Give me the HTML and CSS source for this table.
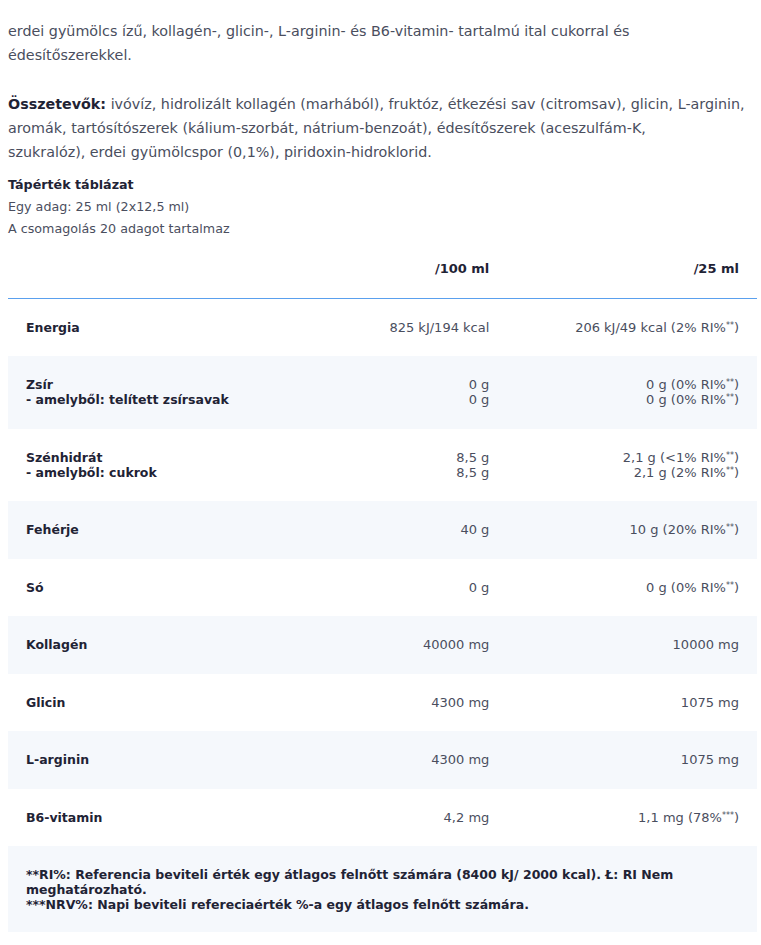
FILE: index.html
```html
<!DOCTYPE html>
<html lang="hu">
<head>
<meta charset="utf-8">
<link rel="stylesheet" href="styles.css">
</head>
<body>
<div class="page">
  <p class="intro">erdei gyümölcs ízű, kollagén-, glicin-, L-arginin- és B6-vitamin- tartalmú ital cukorral és édesítőszerekkel.</p>
  <p class="ingredients"><strong>Összetevők:</strong> ivóvíz, hidrolizált kollagén (marhából), fruktóz, étkezési sav (citromsav), glicin, L-arginin,<br>aromák, tartósítószerek (kálium-szorbát, nátrium-benzoát), édesítőszerek (aceszulfám-K,<br>szukralóz), erdei gyümölcspor (0,1%), piridoxin-hidroklorid.</p>
  <h4 class="table-title">Tápérték táblázat</h4>
  <p class="meta">Egy adag: 25 ml (2x12,5 ml)<br>A csomagolás 20 adagot tartalmaz</p>
  <table class="nutri">
    <thead>
      <tr><th></th><th>/100 ml</th><th>/25 ml</th></tr>
    </thead>
    <tbody>
      <tr><td>Energia</td><td>825 kJ/194 kcal</td><td>206 kJ/49 kcal (2% RI%<sup>**</sup>)</td></tr>
      <tr><td>Zsír<br>- amelyből: telített zsírsavak</td><td>0 g<br>0 g</td><td>0 g (0% RI%<sup>**</sup>)<br>0 g (0% RI%<sup>**</sup>)</td></tr>
      <tr><td>Szénhidrát<br>- amelyből: cukrok</td><td>8,5 g<br>8,5 g</td><td>2,1 g (&lt;1% RI%<sup>**</sup>)<br>2,1 g (2% RI%<sup>**</sup>)</td></tr>
      <tr><td>Fehérje</td><td>40 g</td><td>10 g (20% RI%<sup>**</sup>)</td></tr>
      <tr><td>Só</td><td>0 g</td><td>0 g (0% RI%<sup>**</sup>)</td></tr>
      <tr><td>Kollagén</td><td>40000 mg</td><td>10000 mg</td></tr>
      <tr><td>Glicin</td><td>4300 mg</td><td>1075 mg</td></tr>
      <tr><td>L-arginin</td><td>4300 mg</td><td>1075 mg</td></tr>
      <tr><td>B6-vitamin</td><td>4,2 mg</td><td>1,1 mg (78%<sup>***</sup>)</td></tr>
    </tbody>
  </table>
  <div class="notes">
    **RI%: Referencia beviteli érték egy átlagos felnőtt számára (8400 kJ/ 2000 kcal). Ł: RI Nem meghatározható.<br>
    ***NRV%: Napi beviteli refereciaérték %-a egy átlagos felnőtt számára.
  </div>
</div>
</body>
</html>
```

FILE: styles.css
```css
html, body {
  margin: 0;
  padding: 0;
  background: #ffffff;
}

body {
  font-family: "DejaVu Sans", "Noto Sans", sans-serif;
  color: #4a4e5e;
}

.page {
  padding: 19px 4px 0 8px;
}

.intro,
.ingredients {
  margin: 0 0 25px;
  font-size: 14.3px;
  line-height: 24px;
}

.ingredients {
  margin-bottom: 10px;
}

.ingredients strong {
  color: #1f2335;
  font-weight: 700;
}

.table-title {
  margin: 0;
  font-size: 12.7px;
  line-height: 22px;
  font-weight: 700;
  color: #1f2335;
}

.meta {
  margin: 0;
  font-size: 12.7px;
  line-height: 22px;
}

.nutri {
  width: 100%;
  border-collapse: collapse;
  table-layout: fixed;
  font-size: 13px;
  line-height: 15px;
}

.nutri th,
.nutri td {
  padding: 21px 18px 21.5px;
  vertical-align: middle;
}

.nutri th {
  text-align: right;
  font-weight: 700;
  color: #1f2335;
  border-bottom: 1px solid #5aa0ee;
}

.nutri td {
  text-align: right;
  color: #4a4e5e;
}

.nutri td:first-child {
  text-align: left;
  font-size: 12.5px;
  font-weight: 700;
  color: #1f2335;
}

.nutri tbody tr:nth-child(even) td {
  background: #f5f8fc;
}

.nutri sup {
  font-size: 8px;
  line-height: 0;
  vertical-align: 4px;
}

.notes {
  margin-top: 0;
  background: #f5f8fc;
  padding: 21px 18px 20px;
  font-size: 12.5px;
  line-height: 15px;
  font-weight: 700;
  color: #1f2335;
}
```
